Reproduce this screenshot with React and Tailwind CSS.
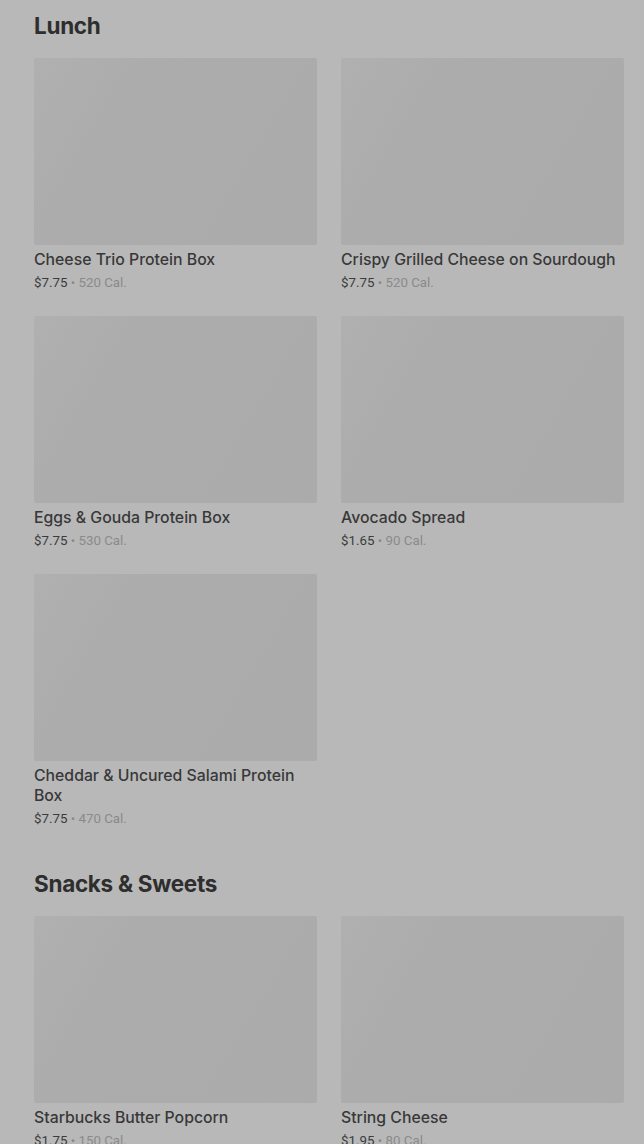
const sections = [
  {
    title: "Lunch",
    items: [
      { name: "Cheese Trio Protein Box", price: "$7.75", cal: "520 Cal." },
      { name: "Crispy Grilled Cheese on Sourdough", price: "$7.75", cal: "520 Cal." },
      { name: "Eggs & Gouda Protein Box", price: "$7.75", cal: "530 Cal." },
      { name: "Avocado Spread", price: "$1.65", cal: "90 Cal." },
      { name: "Cheddar & Uncured Salami Protein Box", price: "$7.75", cal: "470 Cal." },
    ],
  },
  {
    title: "Snacks & Sweets",
    items: [
      { name: "Starbucks Butter Popcorn", price: "$1.75", cal: "150 Cal." },
      { name: "String Cheese", price: "$1.95", cal: "80 Cal." },
    ],
  },
];

function ItemCard({ item }) {
  return (
    <div>
      <div className="h-[187px] w-full rounded-[2px] bg-[linear-gradient(120deg,#b0b0b0_0%,#acacac_30%,#ababab_100%)]" />
      <div className="mt-[5px] font-['Inter',sans-serif] text-[15.8px] leading-5 font-medium text-[#383838]">{item.name}</div>
      <div className="mt-[4px] text-[13.3px] leading-[18px]">
        <span className="text-[#3c3c3c]">{item.price}</span>
        <span className="text-[#8a8a8a]"> • {item.cal}</span>
      </div>
    </div>
  );
}

export default function App() {
  return (
    <div className="w-full bg-[#b8b8b8] pl-[34px] pr-[20px] pt-[10px] font-['Roboto',sans-serif] overflow-hidden h-[1144px]">
      {sections.map((section) => (
        <section key={section.title} className="mb-[40px]">
          <h2 className="font-['Inter',sans-serif] text-[22.5px] leading-8 font-bold tracking-[-0.3px] text-[#2e2e2e] mb-[16px]">
            {section.title}
          </h2>
          <div className="grid grid-cols-2 gap-x-[24px] gap-y-[24px]">
            {section.items.map((item) => (
              <ItemCard key={item.name} item={item} />
            ))}
          </div>
        </section>
      ))}
    </div>
  );
}
